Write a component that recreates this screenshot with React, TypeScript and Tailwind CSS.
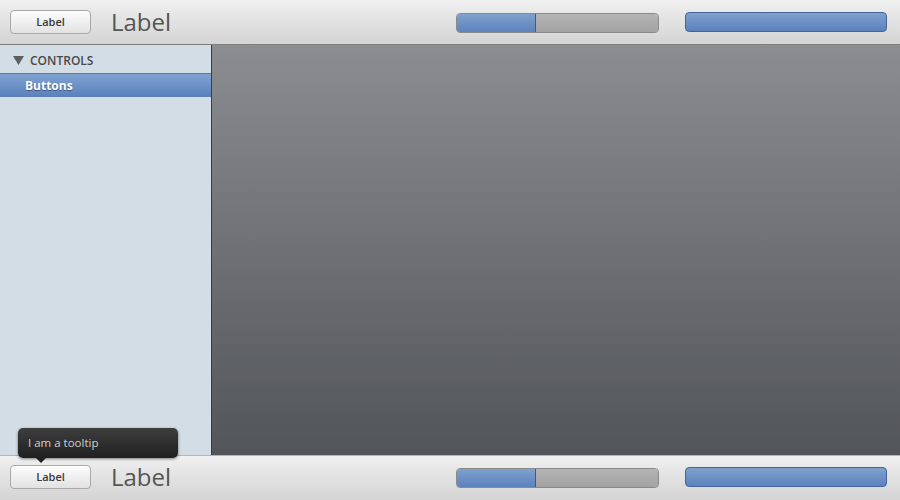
const font = { fontFamily: '"Open Sans", "DejaVu Sans", sans-serif' }

const Button = () => (
  <button className="w-[81px] h-[24px] rounded-[4px] border border-[#a9a9a9] bg-gradient-to-b from-[#fdfdfd] to-[#e2e2e2] text-[11px] font-semibold text-[#3a3a3a] shadow-[inset_0_1px_0_#fff]">
    Label
  </button>
)

const Bars = () => (
  <div className="ml-auto flex items-center gap-[26px] pr-[13px]">
    <div className="flex w-[203px] h-[20px] rounded-[4px] overflow-hidden border border-[#8a8a8a] mt-[2px]">
      <div className="w-[79px] h-full bg-gradient-to-b from-[#7ea1cd] to-[#5d82bd] border-r border-[#41598a]" />
      <div className="flex-1 h-full bg-gradient-to-b from-[#b4b4b4] to-[#a2a2a2]" />
    </div>
    <div className="w-[202px] h-[20px] rounded-[4px] border border-[#46639a] bg-gradient-to-b from-[#7ea1cd] to-[#5d82bd]" />
  </div>
)

const Toolbar = ({ top }: { top: boolean }) => (
  <div
    className={`h-[45px] flex items-center pl-[10px] bg-gradient-to-b from-[#f0f0f0] to-[#d4d4d4] ${top ? 'border-b border-[#7e7e7e]' : 'border-t border-[#b5b5b5] pb-[2px]'}`}
  >
    <Button />
    <span className="ml-[20px] text-[24px] leading-none text-[#555] mb-[1px]">Label</span>
    <Bars />
  </div>
)

export default function App() {
  return (
    <div style={font} className="w-[900px] h-[500px] flex flex-col overflow-hidden relative">
      <Toolbar top />
      <div className="flex flex-1 min-h-0">
        <div className="w-[212px] bg-[#d3dde6] border-r border-[#3b3d42] flex flex-col pt-[5px]">
          <div className="flex items-center h-[21px] pl-[13px] gap-[6px] text-[12px] font-semibold text-[#4a4a4a]">
            <svg width="11" height="9" viewBox="0 0 11 9">
              <path d="M0 0 H11 L5.5 9 Z" fill="#5e5e5e" />
            </svg>
            CONTROLS
          </div>
          <div className="mt-[2px] h-[24px] flex items-center pl-[25px] border-t border-[#5a7bb1] bg-gradient-to-b from-[#7fa3d0] to-[#5b81bd] text-[12px] font-bold text-white [text-shadow:0_1px_1px_rgba(0,0,0,0.4)]">
            Buttons
          </div>
        </div>
        <div className="flex-1 bg-gradient-to-b from-[#8b8d91] to-[#52555a]" />
      </div>
      <Toolbar top={false} />

      {/* tooltip */}
      <div className="absolute left-[18px] top-[428px] w-[160px] h-[30px] rounded-[5px] bg-gradient-to-b from-[#3e3e3e] to-[#202020] shadow-[0_1px_3px_rgba(0,0,0,0.5)] flex items-center pl-[10px] text-[11.5px] text-[#cfcfcf]">
        I am a tooltip
        <div className="absolute left-[17px] top-[29px] w-0 h-0 border-l-[6px] border-r-[6px] border-t-[6px] border-l-transparent border-r-transparent border-t-[#202020]" />
      </div>
    </div>
  )
}
